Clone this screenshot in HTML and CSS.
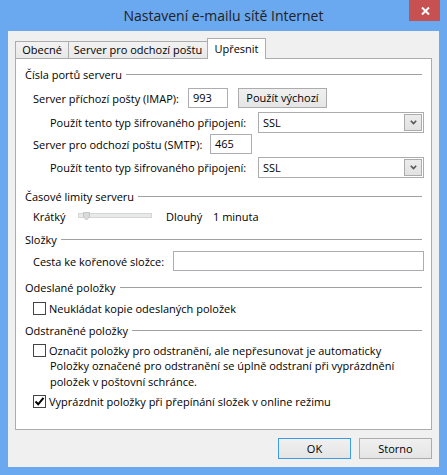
FILE: index.html
```html
<!DOCTYPE html>
<html lang="cs">
<head>
<meta charset="utf-8">
<title>Nastavení e-mailu sítě Internet</title>
<link rel="stylesheet" href="styles.css">
</head>
<body>
<div class="window">
  <div class="titlebar">
    <div class="tb-spacer"></div>
    <div class="title">Nastavení e-mailu sítě Internet</div>
    <div class="close">
      <svg width="9" height="8" viewBox="0 0 9 8"><path d="M1 0.5 L8 7.5 M8 0.5 L1 7.5" stroke="#fff" stroke-width="2" fill="none"/></svg>
    </div>
  </div>
  <div class="client">
    <div class="tabs">
      <div class="tab tab-general">Obecné</div>
      <div class="tab tab-outgoing">Server pro odchozí poštu</div>
      <div class="tab tab-advanced active">Upřesnit</div>
    </div>
    <div class="panel">
      <div class="gh gh-ports"><span>Čísla portů serveru</span><i class="rule"></i></div>
      <div class="row row-imap">
        <span class="lbl lbl-imap">Server příchozí pošty (IMAP):</span>
        <div class="field field-imap">993</div>
        <div class="btn btn-default-port">Použít výchozí</div>
      </div>
      <div class="row row-enc row-enc1">
        <span class="lbl lbl-enc">Použít tento typ šifrovaného připojení:</span>
        <div class="select"><span>SSL</span><span class="arrow"><svg width="7" height="5" viewBox="0 0 7 5"><path d="M0.8 0.8 L3.5 3.6 L6.2 0.8" stroke="#555" stroke-width="1.6" fill="none"/></svg></span></div>
      </div>
      <div class="row row-smtp">
        <span class="lbl lbl-smtp">Server pro odchozí poštu (SMTP):</span>
        <div class="field field-smtp">465</div>
      </div>
      <div class="row row-enc row-enc2">
        <span class="lbl lbl-enc">Použít tento typ šifrovaného připojení:</span>
        <div class="select"><span>SSL</span><span class="arrow"><svg width="7" height="5" viewBox="0 0 7 5"><path d="M0.8 0.8 L3.5 3.6 L6.2 0.8" stroke="#555" stroke-width="1.6" fill="none"/></svg></span></div>
      </div>

      <div class="gh gh-timeouts"><span>Časové limity serveru</span><i class="rule"></i></div>
      <div class="row row-slider">
        <span class="lbl lbl-short">Krátký</span>
        <svg class="slider" width="74" height="20" viewBox="0 0 74 20">
          <rect x="0.5" y="7.5" width="73" height="4" fill="#e7eaea" stroke="#d6d6d6"/>
          <path d="M5.5 6.5 H11.5 V11 L8.5 14 L5.5 11 Z" fill="#dadada" stroke="#c4c4c4"/>
        </svg>
        <span class="lbl lbl-long">Dlouhý</span>
        <span>1 minuta</span>
      </div>

      <div class="gh gh-folders"><span>Složky</span><i class="rule"></i></div>
      <div class="row row-root">
        <span class="lbl lbl-root">Cesta ke kořenové složce:</span>
        <div class="field field-root"></div>
      </div>

      <div class="gh gh-sent"><span>Odeslané položky</span><i class="rule"></i></div>
      <div class="row row-check row-check1">
        <span class="cb"></span><span>Neukládat kopie odeslaných položek</span>
      </div>

      <div class="gh gh-deleted"><span>Odstraněné položky</span><i class="rule"></i></div>
      <div class="row row-check row-check2">
        <span class="cb"></span><span>Označit položky pro odstranění, ale nepřesunovat je automaticky</span>
      </div>
      <div class="note">Položky označené pro odstranění se úplně odstraní při vyprázdnění<br>položek v poštovní schránce.</div>
      <div class="row row-check row-check3">
        <span class="cb checked"><svg width="11" height="11" viewBox="0 0 11 11"><path d="M1.5 5.5 L4.2 8.3 L9.5 1.8" stroke="#000" stroke-width="2" fill="none"/></svg></span><span>Vyprázdnit položky při přepínání složek v online režimu</span>
      </div>
    </div>
    <div class="buttons">
      <div class="btn dlg-btn default">OK</div>
      <div class="btn dlg-btn">Storno</div>
    </div>
  </div>
</div>
</body>
</html>
```
FILE: styles.css
```css
html, body {
  margin: 0;
  padding: 0;
}
body {
  width: 447px;
  height: 475px;
  overflow: hidden;
  background: #6aa8f0;
  font-family: "Open Sans", "Noto Sans", sans-serif;
  font-size: 11px;
  color: #000;
}
.window {
  display: flex;
  flex-direction: column;
  height: 475px;
}
.titlebar {
  height: 31px;
  flex: none;
  display: grid;
  grid-template-columns: 1fr auto 1fr;
}
.title {
  font-size: 14px;
  line-height: 31px;
  color: #222;
  white-space: nowrap;
}
.close {
  justify-self: end;
  width: 31px;
  height: 21px;
  margin-right: 7px;
  background: #c75050;
  display: flex;
  align-items: center;
  justify-content: center;
}
.close svg { display: block; margin-left: 1px; margin-top: 1px; }

.client {
  flex: 1;
  margin: 0 8px 8px;
  background: #f0f0f0;
  padding: 7px 7px 8px;
  display: flex;
  flex-direction: column;
}
.tabs {
  display: flex;
  align-items: flex-end;
  height: 20px;
  flex: none;
}
.tab {
  box-sizing: border-box;
  height: 17px;
  border: 1px solid #acacac;
  border-bottom: none;
  background: linear-gradient(#f2f2f2, #e8e8e8);
  text-align: center;
  line-height: 16px;
  white-space: nowrap;
}
.tab + .tab { margin-left: -1px; }
.tab-general { width: 54px; }
.tab-outgoing { width: 140px; }
.tab-advanced { width: 59px; }
.tab.active {
  height: 21px;
  margin-bottom: -1px;
  background: #fff;
  position: relative;
  z-index: 1;
  line-height: 19px;
}

.panel {
  box-sizing: border-box;
  height: 372px;
  flex: none;
  border: 1px solid #acacac;
  background: #fff;
  padding: 5px 7px 0 9px;
}
.gh {
  display: flex;
  align-items: center;
  height: 20px;
  white-space: nowrap;
}
.gh .rule {
  flex: 1;
  height: 1px;
  background: #a0a0a0;
  margin: 0 2px 0 4px;
}
.gh-timeouts { margin-top: 8px; }
.gh-folders { margin-top: 3px; }
.gh-sent { margin-top: 6px; }
.gh-deleted { margin-top: 2px; }

.row {
  display: flex;
  align-items: center;
  height: 20px;
  margin-left: 8px;
  white-space: nowrap;
}
.lbl { flex: none; }
.row-imap { margin-top: 4px; }
.row-enc { height: 21px; margin-left: 25px; }
.row-enc1 { margin-top: 4px; }
.row-smtp { margin-top: 1px; }
.row-enc2 { margin-top: 3px; }
.row-root { margin-top: 2px; }

.lbl-imap { width: 155px; }
.lbl-smtp { width: 177px; }
.lbl-enc { width: 208px; }
.lbl-root { width: 140px; }
.lbl-short { width: 45px; }
.lbl-long { width: 47px; }
.slider { display: block; flex: none; margin-right: 14px; }

.field {
  box-sizing: border-box;
  height: 20px;
  border: 1px solid #abadb3;
  background: #fff;
  padding-left: 4px;
  line-height: 18px;
}
.field-imap { width: 40px; }
.field-smtp { width: 42px; }
.field-root { flex: 1; }

.btn {
  box-sizing: border-box;
  height: 20px;
  border: 1px solid #acacac;
  background: linear-gradient(#f0f0f0, #e5e5e5);
  text-align: center;
  line-height: 18px;
}
.btn-default-port { width: 89px; margin-left: 10px; }

.select {
  flex: 1;
  box-sizing: border-box;
  height: 21px;
  border: 1px solid #acacac;
  background: #fff;
  display: flex;
  align-items: center;
  justify-content: space-between;
  padding-left: 4px;
}
.select .arrow {
  box-sizing: border-box;
  width: 18px;
  height: 17px;
  margin-right: 1px;
  border: 1px solid #acacac;
  background: linear-gradient(#ececec, #e2e2e2);
  display: flex;
  align-items: center;
  justify-content: center;
}
.select .arrow svg { display: block; }

.row-check { height: 19px; }
.row-check1 { margin-top: 2px; }
.row-check2 { margin-top: 1px; }
.row-check3 { margin-top: 2px; }
.cb {
  box-sizing: border-box;
  width: 13px;
  height: 13px;
  flex: none;
  border: 1px solid #444;
  background: #fff;
  margin-right: 3px;
  display: flex;
  align-items: center;
  justify-content: center;
}
.cb svg { display: block; }
.note {
  margin-left: 25px;
  margin-top: -2px;
  line-height: 16px;
  white-space: nowrap;
}

.buttons {
  display: flex;
  justify-content: flex-end;
  gap: 8px;
  margin-top: 8px;
}
.dlg-btn {
  width: 73px;
  height: 21px;
  line-height: 19px;
}
.dlg-btn.default { border-color: #3c9be8; }
```
